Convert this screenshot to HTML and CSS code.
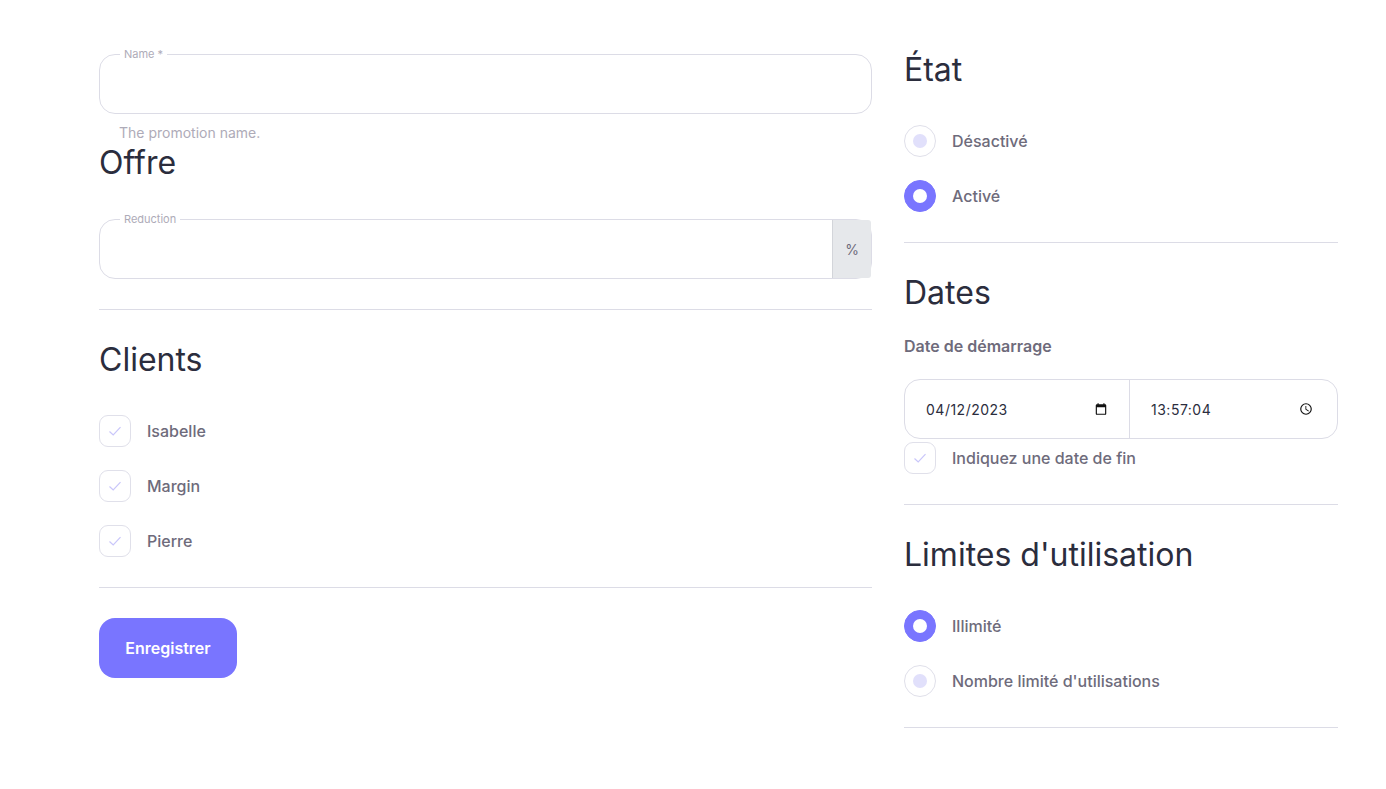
FILE: index.html
```html
<!DOCTYPE html>
<html lang="fr">
<head>
  <meta charset="UTF-8">
  <title>Promotion</title>
  <link rel="stylesheet" href="styles.css">
</head>
<body>
  <form class="page">

    <!-- Colonne gauche -->
    <div class="col-left">
      <fieldset class="field">
        <legend>Name *</legend>
        <input type="text" class="field-input">
      </fieldset>
      <div class="help">The promotion name.</div>

      <h2 class="title title-offre">Offre</h2>
      <fieldset class="field field-addon">
        <legend>Reduction</legend>
        <input type="text" class="field-input">
        <span class="addon">%</span>
      </fieldset>
      <hr class="sep sep-offre">

      <h2 class="title">Clients</h2>
      <div class="options">
        <label class="option">
          <span class="check"><svg viewBox="0 0 14 14"><path d="M1.5 7.5 5.2 11 12.5 3.2"/></svg></span>
          Isabelle
        </label>
        <label class="option">
          <span class="check"><svg viewBox="0 0 14 14"><path d="M1.5 7.5 5.2 11 12.5 3.2"/></svg></span>
          Margin
        </label>
        <label class="option">
          <span class="check"><svg viewBox="0 0 14 14"><path d="M1.5 7.5 5.2 11 12.5 3.2"/></svg></span>
          Pierre
        </label>
      </div>
      <hr class="sep">

      <button type="button" class="btn">Enregistrer</button>
    </div>

    <!-- Colonne droite -->
    <div class="col-right">
      <h2 class="title title-first">État</h2>
      <div class="options">
        <label class="option"><span class="radio"></span>Désactivé</label>
        <label class="option"><span class="radio on"></span>Activé</label>
      </div>
      <hr class="sep">

      <h2 class="title">Dates</h2>
      <div class="date-label">Date de démarrage</div>
      <div class="datetime">
        <div class="dt-part dt-date">
          <span>04/12/2023</span>
          <svg viewBox="0 0 24 24"><path d="M19 4h-1V2h-2v2H8V2H6v2H5a2 2 0 0 0-2 2v14a2 2 0 0 0 2 2h14a2 2 0 0 0 2-2V6a2 2 0 0 0-2-2zm0 16H5V9h14v11z"/></svg>
        </div>
        <div class="dt-part dt-time">
          <span>13:57:04</span>
          <svg viewBox="0 0 24 24"><path d="M12 2a10 10 0 1 0 0 20 10 10 0 0 0 0-20zm0 18a8 8 0 1 1 0-16 8 8 0 0 1 0 16zm.5-13H11v6l5.2 3.1.8-1.2-4.5-2.7V7z"/></svg>
        </div>
      </div>
      <label class="option option-end">
        <span class="check"><svg viewBox="0 0 14 14"><path d="M1.5 7.5 5.2 11 12.5 3.2"/></svg></span>
        Indiquez une date de fin
      </label>
      <hr class="sep sep-dates">

      <h2 class="title">Limites d'utilisation</h2>
      <div class="options">
        <label class="option"><span class="radio on"></span>Illimité</label>
        <label class="option"><span class="radio"></span>Nombre limité d'utilisations</label>
      </div>
      <hr class="sep">
    </div>

  </form>
</body>
</html>
```

FILE: styles.css
```css
body {
  margin: 0;
  padding: 0;
  font-family: Inter, "Liberation Sans", sans-serif;
  background-color: white;
  color: #6e6b7b;
}

.page {
  display: flex;
  align-items: flex-start;
  gap: 32px;
  padding: 48px 48px 0 99px;
}

.col-left {
  width: 773px;
}

.col-right {
  width: 434px;
}

.title {
  margin: 30px 0 35px;
  font-size: 32px;
  line-height: 40px;
  font-weight: 400;
  color: #2b2d3d;
}

.title-first {
  margin-top: 2px;
}

.title-offre {
  margin-top: 2px;
  margin-bottom: 30px;
}

.sep {
  margin: 30px 0 0;
  border: none;
  border-top: 1px solid #dcdce6;
}

/* Champ avec legende */
.field {
  display: flex;
  height: 66px;
  margin: 0;
  padding: 0;
  border: 1px solid #dcdce6;
  border-radius: 16px;
  box-sizing: border-box;
}

.field legend {
  margin-left: 20px;
  padding: 0 4px;
  font-size: 11px;
  line-height: 13px;
  color: #aeabb8;
}

.field-input {
  flex: 1;
  min-width: 0;
  border: none;
  outline: none;
  background: transparent;
  font-family: inherit;
}

.addon {
  display: flex;
  align-items: center;
  justify-content: center;
  width: 38px;
  margin-top: -6px;
  background-color: #e6e8eb;
  border-left: 1px solid #d3d5da;
  border-radius: 0 3px 3px 0;
  font-size: 14px;
}

.help {
  margin: 10px 0 0 20px;
  font-size: 14px;
  line-height: 17px;
  color: #aeabb8;
}

/* Cases et radios */
.options {
  display: flex;
  flex-direction: column;
  gap: 23px;
}

.option {
  display: flex;
  align-items: center;
  gap: 16px;
  font-size: 16px;
  line-height: 32px;
  font-weight: 500;
  color: #6e6b7b;
}

.check {
  display: flex;
  align-items: center;
  justify-content: center;
  width: 32px;
  height: 32px;
  border: 1px solid #e0e0ea;
  border-radius: 9px;
  box-sizing: border-box;
}

.check svg {
  width: 14px;
  height: 14px;
  fill: none;
  stroke: #c9c6fa;
  stroke-width: 1.2;
}

.radio {
  display: flex;
  align-items: center;
  justify-content: center;
  width: 32px;
  height: 32px;
  border: 1px solid #e0e0ea;
  border-radius: 50%;
  box-sizing: border-box;
}

.radio::after {
  content: "";
  width: 14px;
  height: 14px;
  border-radius: 50%;
  background-color: #e1e0fb;
}

.radio.on {
  background-color: #7975ff;
  border-color: #7975ff;
}

.radio.on::after {
  background-color: white;
}

/* Dates */
.date-label {
  margin-top: -12px;
  font-size: 16px;
  line-height: 20px;
  font-weight: 600;
  color: #6e6b7b;
}

.datetime {
  display: flex;
  height: 60px;
  margin-top: 23px;
  border: 1px solid #dcdce6;
  border-radius: 16px;
  box-sizing: border-box;
  font-size: 14px;
  letter-spacing: 0.5px;
  color: #2b2d3d;
}

.dt-part {
  display: flex;
  align-items: center;
  justify-content: space-between;
  box-sizing: border-box;
}

.dt-part svg {
  width: 14px;
  height: 14px;
  fill: #111;
}

.dt-date {
  width: 225px;
  padding: 0 21px 0 21px;
  border-right: 1px solid #dcdce6;
}

.dt-time {
  flex: 1;
  padding: 0 24px 0 21px;
}

.option-end {
  margin-top: 3px;
}

.sep-dates {
  margin-top: 30px;
}

.btn {
  display: block;
  width: 138px;
  height: 60px;
  margin-top: 30px;
  border: none;
  border-radius: 16px;
  background-color: #7975ff;
  color: white;
  font-family: inherit;
  font-size: 16px;
  font-weight: 600;
}
```
